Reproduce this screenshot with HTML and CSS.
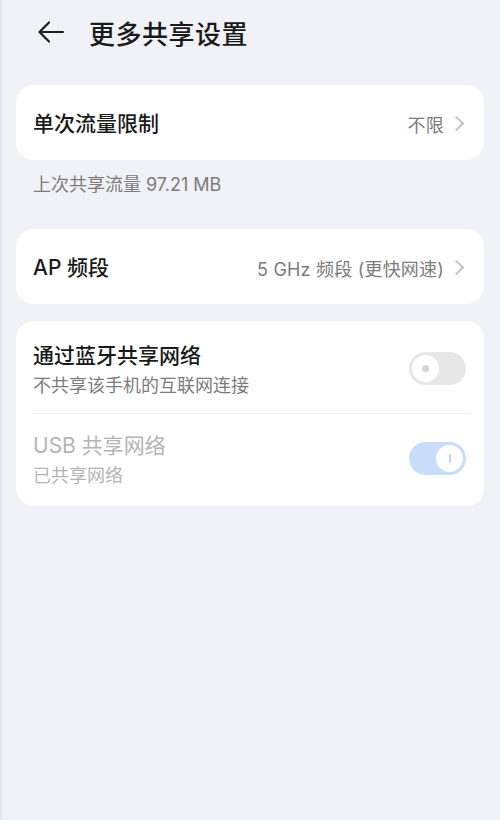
FILE: index.html
```html
<!DOCTYPE html>
<html lang="zh-CN">
<head>
	<meta charset="UTF-8">
	<meta name="viewport" content="width=device-width, initial-scale=1.0">
	<link rel="stylesheet" href="styles.css">
	<title>更多共享设置</title>
</head>
<body>
	<div id="app">
		<header class="top-bar">
			<svg class="back" width="28" height="24" viewBox="0 0 28 24">
				<path d="M26 12H3M12 2.5L2.5 12L12 21.5" fill="none" stroke="#1c1c1c" stroke-width="2.2" stroke-linecap="round" stroke-linejoin="round"/>
			</svg>
			<h1>更多共享设置</h1>
		</header>

		<div class="card">
			<div class="row row-single">
				<span class="label">单次流量限制</span>
				<span class="value">不限</span>
				<span class="chevron"></span>
			</div>
		</div>
		<p class="caption">上次共享流量 97.21 MB</p>

		<div class="card card-ap">
			<div class="row row-single">
				<span class="label">AP 频段</span>
				<span class="value">5 GHz 频段 (更快网速)</span>
				<span class="chevron"></span>
			</div>
		</div>

		<div class="card card-share">
			<div class="row row-double">
				<div class="text">
					<span class="label">通过蓝牙共享网络</span>
					<span class="sub">不共享该手机的互联网连接</span>
				</div>
				<span class="switch"><span class="knob"></span></span>
			</div>
			<div class="divider"></div>
			<div class="row row-double disabled">
				<div class="text">
					<span class="label">USB 共享网络</span>
					<span class="sub">已共享网络</span>
				</div>
				<span class="switch on"><span class="knob"></span></span>
			</div>
		</div>
	</div>
</body>
</html>
```

FILE: styles.css
```css
body {
	margin: 0;
	padding: 0;
	font-family: Inter, "Noto Sans CJK SC", sans-serif;
	background: #f0f2f7;
	color: #1a1a1a;
	border-left: 2px solid #e3e5ea;
	min-height: 820px;
	box-sizing: border-box;
}

h1, p {
	margin: 0;
	padding: 0;
}

#app {
	padding: 0 16px 0 14px;
}

.top-bar {
	height: 64px;
	display: flex;
	align-items: center;
	margin-bottom: 21px;
}
.top-bar .back {
	margin-left: 21px;
	margin-right: 24px;
}
.top-bar h1 {
	font-size: 26px;
	font-weight: 500;
	letter-spacing: 0.5px;
}

.card {
	background: #fff;
	border-radius: 18px;
}
.card-ap {
	margin-top: 32px;
}
.card-share {
	margin-top: 17px;
}

.row {
	display: flex;
	align-items: center;
	padding: 0 18px 0 17px;
}
.row-single {
	height: 75px;
	padding-top: 2px;
	box-sizing: border-box;
}
.row .label {
	font-size: 21px;
	font-weight: 500;
	line-height: 28px;
}
.row .value {
	margin-left: auto;
	font-size: 18px;
	letter-spacing: 0.2px;
	color: #7c7c7c;
}
.chevron {
	width: 9px;
	height: 9px;
	border-top: 2px solid #c6c6c6;
	border-right: 2px solid #c6c6c6;
	transform: rotate(45deg);
	margin-left: 7px;
	margin-right: 4px;
}

.caption {
	font-size: 18px;
	line-height: 24px;
	color: #7c7c7c;
	padding: 13px 0 0 17px;
}

.row-double {
	height: 92px;
	box-sizing: border-box;
	padding-top: 21px;
	padding-bottom: 14px;
	align-items: flex-start;
}
.row-double.disabled {
	padding-top: 18px;
}
.row-double .text {
	display: flex;
	flex-direction: column;
}
.row-double .sub {
	margin-top: 3px;
	font-size: 18px;
	line-height: 26px;
	color: #7c7c7c;
}
.row-double .switch {
	margin-left: auto;
	margin-top: 10px;
}
.row.disabled .label,
.row.disabled .sub {
	color: #b4b4b4;
	font-weight: 400;
}

.divider {
	height: 1px;
	background: #ececec;
	margin: 0 14px 0 17px;
}

.switch {
	width: 57px;
	height: 33px;
	border-radius: 17px;
	background: #e7e7e7;
	display: flex;
	align-items: center;
	padding: 0 3px;
	box-sizing: border-box;
}
.switch .knob {
	width: 27px;
	height: 27px;
	border-radius: 50%;
	background: #fff;
	position: relative;
}
.switch .knob:after {
	content: '';
	position: absolute;
	left: 10px;
	top: 10px;
	width: 7px;
	height: 7px;
	border-radius: 50%;
	background: #d6d6d6;
}
.switch.on {
	background: #c9dcf9;
	justify-content: flex-end;
}
.switch.on .knob:after {
	left: 13px;
	top: 9px;
	width: 1.5px;
	height: 9px;
	border-radius: 1px;
	background: #d0d0d0;
}
```
